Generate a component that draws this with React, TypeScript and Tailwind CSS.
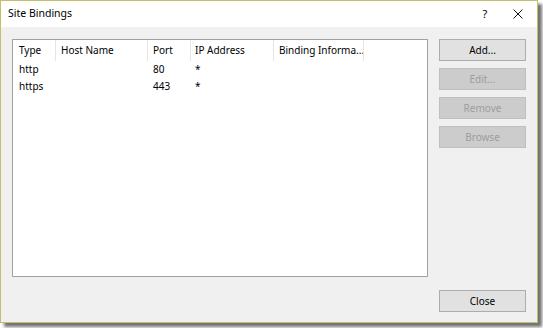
import React from 'react';

const columns = [
  { label: 'Type', width: 'w-[43px]', pad: 'pl-[6px]' },
  { label: 'Host Name', width: 'w-[92px]', pad: 'pl-[5px]' },
  { label: 'Port', width: 'w-[43px]', pad: 'pl-[5px]' },
  { label: 'IP Address', width: 'w-[83px]', pad: 'pl-[4px]' },
  { label: 'Binding Informa...', width: 'w-[90px]', pad: 'pl-[5px]' },
];

const rows = [
  ['http', '', '80', '*', ''],
  ['https', '', '443', '*', ''],
];

function DlgButton({ label, disabled }: { label: string; disabled?: boolean }) {
  return (
    <button
      className={
        disabled
          ? 'w-[87px] h-[22px] border border-[#bfbfbf] bg-[#cccccc] text-[#9d9d9d] text-[10px] leading-none'
          : 'w-[87px] h-[22px] border border-[#adadad] bg-[#e1e1e1] text-black text-[10px] leading-none'
      }
    >
      {label}
    </button>
  );
}

export default function App() {
  return (
    <div className="w-[543px] h-[328px] bg-white font-['Noto_Sans','Open_Sans',sans-serif] overflow-hidden">
      <div className="w-[538px] h-[323px] border border-[#c4c06a] bg-[#f0f0f0] flex flex-col shadow-[4px_4px_3px_rgba(0,0,0,0.55)]">
        {/* title bar */}
        <div className="h-[26px] bg-white flex items-center shrink-0">
          <span className="pl-[7px] text-[10.5px] text-black">Site Bindings</span>
          <span className="ml-auto text-[11px] text-black w-[30px] text-center">?</span>
          <span className="w-[36px] mr-[1px] flex justify-center">
            <svg width="10" height="10" viewBox="0 0 10 10">
              <path d="M0.5 0.5 L9.5 9.5 M9.5 0.5 L0.5 9.5" stroke="#111" strokeWidth="1" />
            </svg>
          </span>
        </div>

        <div className="flex gap-[11px] pl-[11px] pt-[12px]">
          {/* list view */}
          <div className="w-[416px] h-[238px] border border-[#a0a0a0] bg-white text-[10px] text-black">
            <div className="flex h-[21px] items-center">
              {columns.map((c) => (
                <div key={c.label} className={`${c.width} ${c.pad} h-full flex items-center border-r border-[#e5e5e5] whitespace-nowrap overflow-hidden`}>
                  {c.label}
                </div>
              ))}
            </div>
            {rows.map((r, i) => (
              <div key={i} className="flex h-[17px] items-center">
                {r.map((cell, j) => (
                  <div key={j} className={`${columns[j].width} ${columns[j].pad} whitespace-nowrap`}>
                    {cell}
                  </div>
                ))}
              </div>
            ))}
          </div>

          {/* side buttons */}
          <div className="flex flex-col gap-[7px]">
            <DlgButton label="Add..." />
            <DlgButton label="Edit..." disabled />
            <DlgButton label="Remove" disabled />
            <DlgButton label="Browse" disabled />
          </div>
        </div>

        <div className="flex justify-end pr-[11px] pt-[13px]">
          <DlgButton label="Close" />
        </div>
      </div>
    </div>
  );
}
